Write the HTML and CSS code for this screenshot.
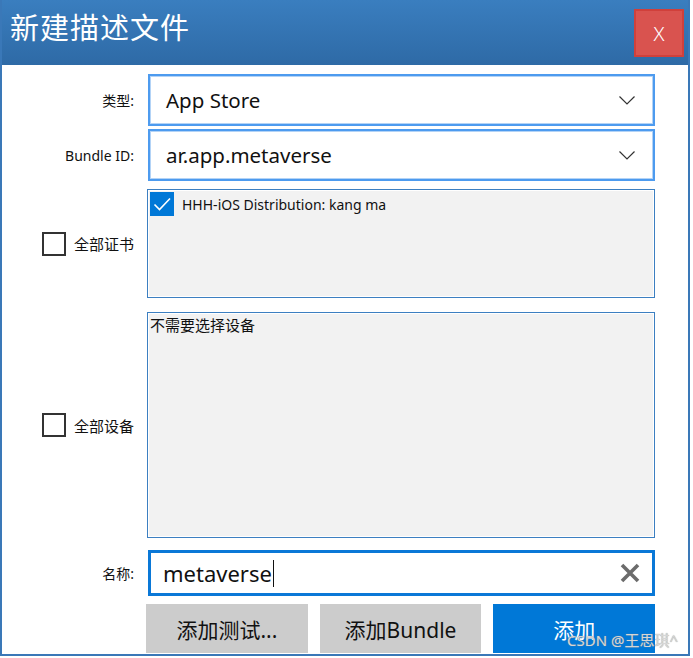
FILE: index.html
```html
<!DOCTYPE html>
<html lang="zh-CN">
<head>
    <meta charset="UTF-8">
    <title>新建描述文件</title>
    <link rel="stylesheet" href="styles.css">
</head>
<body>
    <div class="window">
        <!-- Title bar -->
        <div class="titlebar">
            <span class="title">新建描述文件</span>
            <button class="close">X</button>
        </div>

        <div class="content">
            <div class="row row-combo">
                <label class="label">类型:</label>
                <div class="combo">
                    <span>App Store</span>
                    <svg class="chevron" width="16" height="9" viewBox="0 0 16 9"><path d="M0.5 0.5 L8 8 L15.5 0.5" fill="none" stroke="#333" stroke-width="1.2"/></svg>
                </div>
            </div>

            <div class="row row-combo gap-small">
                <label class="label">Bundle ID:</label>
                <div class="combo">
                    <span>ar.app.metaverse</span>
                    <svg class="chevron" width="16" height="9" viewBox="0 0 16 9"><path d="M0.5 0.5 L8 8 L15.5 0.5" fill="none" stroke="#333" stroke-width="1.2"/></svg>
                </div>
            </div>

            <div class="row row-certs">
                <label class="check-label"><span class="checkbox"></span>全部证书</label>
                <div class="listbox">
                    <div class="list-item">
                        <span class="checkbox checked">
                            <svg width="24" height="24" viewBox="0 0 24 24"><path d="M4.5 12.5 L9.5 17.5 L20 6.5" fill="none" stroke="#fff" stroke-width="1.6"/></svg>
                        </span>
                        HHH-iOS Distribution: kang ma
                    </div>
                </div>
            </div>

            <div class="row row-devices">
                <label class="check-label"><span class="checkbox"></span>全部设备</label>
                <div class="listbox">
                    <div class="list-note">不需要选择设备</div>
                </div>
            </div>

            <div class="row row-name">
                <label class="label">名称:</label>
                <div class="textbox">
                    <span class="value">metaverse</span><span class="caret"></span>
                    <svg class="clear" width="20" height="20" viewBox="0 0 20 20"><path d="M2 2 L18 18 M18 2 L2 18" stroke="#6b6b6b" stroke-width="3.6"/></svg>
                </div>
            </div>

            <div class="actions">
                <button class="btn">添加测试...</button>
                <button class="btn">添加Bundle</button>
                <button class="btn primary">添加</button>
            </div>
        </div>

        <div class="watermark">CSDN @王思琪^</div>
    </div>
</body>
</html>
```

FILE: styles.css
```css
body {
    margin: 0;
    background: white;
    font-family: "Noto Sans", "Noto Sans CJK SC", sans-serif;
    color: #111;
}
.window {
    position: relative;
    width: 690px;
    height: 656px;
    box-sizing: border-box;
    border: 2px solid #3a78b8;
    border-top: none;
    background: white;
    overflow: hidden;
}
.titlebar {
    height: 65px;
    margin: 0 -2px;
    background: linear-gradient(#3a7ebf, #2e6aa6);
    display: flex;
    justify-content: space-between;
    align-items: flex-start;
}
.title {
    color: white;
    font-family: "Noto Sans CJK SC", sans-serif;
    font-size: 29px;
    line-height: 1;
    margin: 12px 0 0 10px;
    letter-spacing: 1px;
}
.close {
    width: 50px;
    height: 48px;
    margin: 9px 6px 0 0;
    background: #d9534f;
    border: 2px solid #d0403b;
    color: white;
    font-family: "Noto Sans", sans-serif;
    font-size: 20px;
    font-weight: 300;
    padding: 0;
}
.content {
    padding-top: 9px;
}
.row {
    display: grid;
    grid-template-columns: 132px 507px;
    column-gap: 14px;
    align-items: center;
}
.gap-small {
    margin-top: 3px;
}
.label {
    text-align: right;
    font-size: 14px;
}
.combo {
    height: 52px;
    box-sizing: border-box;
    border: 2px solid #4d9bef;
    box-shadow: inset 0 0 0 1px #b3d3f6;
    display: flex;
    align-items: center;
    justify-content: space-between;
    padding: 0 18px 0 16px;
    font-size: 20.5px;
}
.chevron {
    display: block;
}
.check-label {
    display: flex;
    align-items: center;
    justify-content: flex-end;
    gap: 8px;
    font-family: "Noto Sans CJK SC", sans-serif;
    font-size: 15px;
}
.checkbox {
    width: 24px;
    height: 24px;
    box-sizing: border-box;
    border: 2px solid #333;
    background: white;
    display: inline-block;
}
.checkbox.checked {
    border: none;
    background: #0078d7;
}
.checkbox svg {
    display: block;
}
.listbox {
    box-sizing: border-box;
    height: 100%;
    border: 1px solid #3c7fc1;
    box-shadow: inset 0 0 0 1px white;
    background: #f2f2f2;
    margin-left: -1px;
}
.row-certs {
    margin-top: 8px;
    height: 109px;
}
.row-devices {
    margin-top: 14px;
    height: 226px;
}
.list-item {
    display: flex;
    align-items: center;
    gap: 8px;
    padding: 2px;
    font-size: 14px;
}
.list-note {
    padding: 2px 2px;
    font-family: "Noto Sans CJK SC", sans-serif;
    font-size: 15px;
    line-height: 20px;
}
.row-name {
    margin-top: 12px;
}
.textbox {
    height: 46px;
    box-sizing: border-box;
    border: 3px solid #0a78d7;
    display: flex;
    align-items: center;
    padding: 0 12px 0 12px;
    font-size: 22px;
}
.caret {
    width: 1px;
    height: 27px;
    background: #111;
    margin-left: 1px;
}
.clear {
    margin-left: auto;
}
.actions {
    display: flex;
    gap: 12px;
    margin: 8px 33px 0 144px;
}
.btn {
    flex: 1;
    height: 49px;
    border: none;
    background: #cccccc;
    color: #111;
    font-family: "Noto Sans", "Noto Sans CJK SC", sans-serif;
    font-size: 21px;
    padding: 0;
}
.btn.primary {
    background: #0078d7;
    color: white;
}
.watermark {
    position: absolute;
    right: 10px;
    bottom: 4px;
    font-size: 15px;
    color: #d6d6d6;
    text-shadow: 0 0 1px #888;
}
```
